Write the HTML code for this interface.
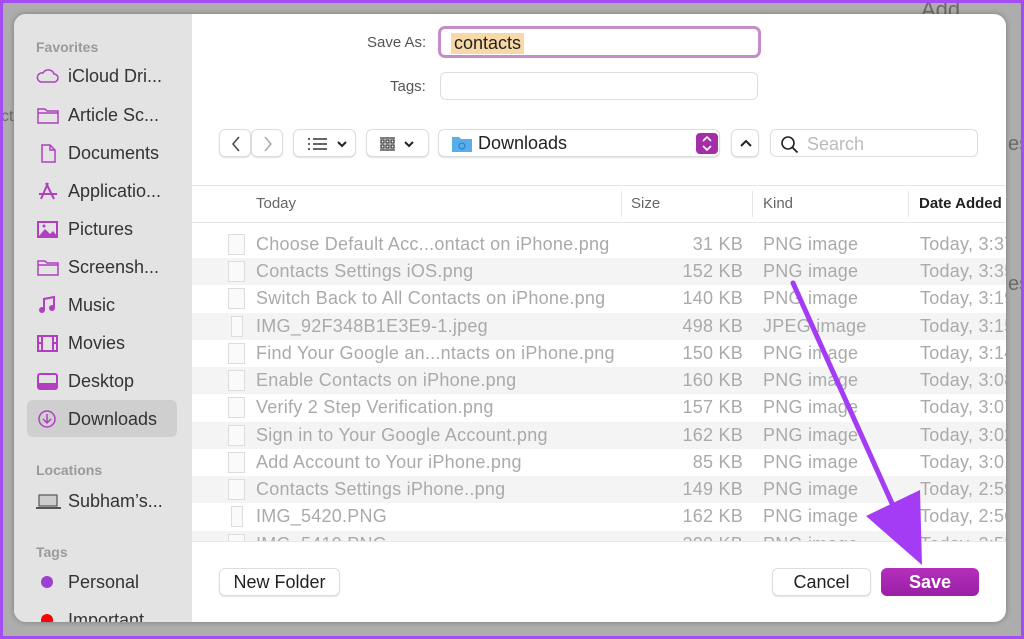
<!DOCTYPE html>
<html><head><meta charset="utf-8"><style>
*{box-sizing:border-box;margin:0;padding:0}
body{width:1024px;height:639px;overflow:hidden;background:#a64cf5;font-family:"Liberation Sans",sans-serif;position:relative}
.bg{position:absolute;left:3px;top:3px;right:3px;bottom:3px;background:#adadad;overflow:hidden}
.bgt{position:absolute;color:#6a6a6a;font-size:20px}
.dlg{position:absolute;left:14px;top:14px;width:992px;height:608px;background:#fff;border-radius:12px;overflow:hidden;box-shadow:0 0 6px rgba(0,0,0,.3)}
.side{position:absolute;left:0;top:0;width:178px;height:608px;background:#e3e3e3}
.sh{position:absolute;left:22px;font-size:14px;color:#9a9a9a;font-weight:bold}
.si{position:absolute;left:22px;font-size:18px;color:#333;height:24px;line-height:24px}
.si svg{position:absolute;left:0;top:2px}
.si span{position:absolute;left:32px;white-space:nowrap}
.abs{position:absolute}
.btn{position:absolute;background:#fff;border:1px solid #ddd;border-radius:6px;box-shadow:0 1px 1px rgba(0,0,0,.12)}
.row{position:absolute;left:178px;width:814px;height:27px;font-size:18px;letter-spacing:.25px;color:#aaa;line-height:27px}
.row.s{background:#f4f4f4}
.row span{position:absolute;white-space:nowrap}
.fi{position:absolute;left:36px;top:3px;width:17px;height:21px;border:1px solid #ddd;background:#fafafa}
</style></head><body>
<div class="bg">
<div class="bgt" style="left:918px;top:-6px;font-size:22px">Add birthd</div>
<div class="bgt" style="left:1005px;top:130px">es</div>
<div class="bgt" style="left:1005px;top:270px">es</div>
<div class="bgt" style="left:-2px;top:105px;font-size:16px">ct</div>
</div>
<div class="dlg">
<div class="side">
<div class="sh" style="top:25px">Favorites</div>
<div class="si" style="top:50px"><svg width="24" height="20" viewBox="0 0 24 20"><path d="M5 16h13a4 4 0 0 0 0-8 6 6 0 0 0-11-1A4.5 4.5 0 0 0 5 16z" fill="none" stroke="#b040c0" stroke-width="1.5"/></svg><span>iCloud Dri...</span></div>
<div class="si" style="top:89px"><svg width="24" height="20" viewBox="0 0 24 20"><path d="M2 4h7l2 2h11v12H2z M2 8h20" fill="none" stroke="#b040c0" stroke-width="1.5"/></svg><span>Article Sc...</span></div>
<div class="si" style="top:127px"><svg width="24" height="20" viewBox="0 0 24 20"><path d="M6 2h8l5 5v12H6z M14 2v5h5" fill="none" stroke="#b040c0" stroke-width="1.5"/></svg><span>Documents</span></div>
<div class="si" style="top:165px"><svg width="24" height="20" viewBox="0 0 24 20"><path d="M12 2L5 18 M10 2l8 16 M3 13h18" fill="none" stroke="#b040c0" stroke-width="2"/></svg><span>Applicatio...</span></div>
<div class="si" style="top:203px"><svg width="24" height="20" viewBox="0 0 24 20"><rect x="2" y="3" width="19" height="15" fill="none" stroke="#b040c0" stroke-width="2"/><path d="M3 17l6-7 5 5 3-3 4 5z" fill="#b040c0"/><circle cx="8" cy="7" r="1.5" fill="#b040c0"/></svg><span>Pictures</span></div>
<div class="si" style="top:241px"><svg width="24" height="20" viewBox="0 0 24 20"><path d="M2 4h7l2 2h11v12H2z M2 8h20" fill="none" stroke="#b040c0" stroke-width="1.5"/></svg><span>Screensh...</span></div>
<div class="si" style="top:279px"><svg width="24" height="20" viewBox="0 0 24 20"><path d="M8 15V4l10-2v11" fill="none" stroke="#b040c0" stroke-width="2"/><circle cx="6" cy="15" r="3" fill="#b040c0"/><circle cx="16" cy="13" r="3" fill="#b040c0"/></svg><span>Music</span></div>
<div class="si" style="top:317px"><svg width="24" height="20" viewBox="0 0 24 20"><rect x="2" y="3" width="19" height="15" fill="none" stroke="#b040c0" stroke-width="2"/><path d="M6 3v15M17 3v15M2 10h4M17 10h4" stroke="#b040c0" stroke-width="2"/></svg><span>Movies</span></div>
<div class="si" style="top:355px"><svg width="24" height="20" viewBox="0 0 24 20"><rect x="2" y="3" width="19" height="15" rx="2" fill="none" stroke="#b040c0" stroke-width="2"/><rect x="3" y="12" width="17" height="5" fill="#b040c0"/></svg><span>Desktop</span></div>
<div class="abs" style="left:13px;top:386px;width:150px;height:37px;background:#cfcfcf;border-radius:6px"></div>
<div class="si" style="top:393px"><svg width="24" height="20" viewBox="0 0 24 20"><circle cx="11" cy="10" r="8" fill="none" stroke="#b040c0" stroke-width="1.5"/><path d="M11 5v9M7 10l4 4 4-4" fill="none" stroke="#b040c0" stroke-width="1.5"/></svg><span>Downloads</span></div>
<div class="sh" style="top:448px">Locations</div>
<div class="si" style="top:475px"><svg width="26" height="20" viewBox="0 0 26 20"><rect x="3" y="4" width="18" height="11" fill="#ccc" stroke="#555" stroke-width="1.2"/><path d="M0 17h25" stroke="#555" stroke-width="2"/></svg><span>Subham’s...</span></div>
<div class="sh" style="top:530px">Tags</div>
<div class="si" style="top:556px"><svg width="24" height="20"><circle cx="11" cy="10" r="6" fill="#9b40d0"/></svg><span>Personal</span></div>
<div class="si" style="top:594px"><svg width="24" height="20"><circle cx="11" cy="10" r="6" fill="#f00"/></svg><span>Important</span></div>
</div>
<div class="abs" style="left:353px;top:20px;font-size:15px;color:#555">Save As:</div>
<div class="abs" style="left:424px;top:12px;width:323px;height:32px;border:3px solid #c48ccb;border-radius:7px;background:#fff"></div>
<div class="abs" style="left:437px;top:19px;height:21px;padding:0 3px;background:#f6d9a6;font-size:18px;color:#222;line-height:21px">contacts</div>
<div class="abs" style="left:376px;top:64px;font-size:15px;color:#555">Tags:</div>
<div class="btn" style="left:426px;top:58px;width:318px;height:28px;box-shadow:none"></div>
<div class="btn" style="left:205px;top:115px;width:32px;height:28px"><svg width="32" height="28"><path d="M19 7l-6 7 6 7" fill="none" stroke="#444" stroke-width="1.5"/></svg></div>
<div class="btn" style="left:237px;top:115px;width:32px;height:28px"><svg width="32" height="28"><path d="M13 7l6 7-6 7" fill="none" stroke="#aaa" stroke-width="1.5"/></svg></div>
<div class="btn" style="left:279px;top:115px;width:63px;height:28px"><svg width="63" height="28"><path d="M14 9h2M14 14h2M14 19h2M19 9h14M19 14h14M19 19h14" stroke="#333" stroke-width="1.6"/><path d="M44 12l4 4 4-4" fill="none" stroke="#222" stroke-width="2"/></svg></div>
<div class="btn" style="left:352px;top:115px;width:63px;height:28px"><svg width="63" height="28"><path d="M13 8h15M13 20h15" stroke="#333" stroke-width="1.2"/><g fill="none" stroke="#333" stroke-width="1.2"><rect x="14" y="10" width="3" height="3"/><rect x="19" y="10" width="3" height="3"/><rect x="24" y="10" width="3" height="3"/><rect x="14" y="15" width="3" height="3"/><rect x="19" y="15" width="3" height="3"/><rect x="24" y="15" width="3" height="3"/></g><path d="M38 12l4 4 4-4" fill="none" stroke="#222" stroke-width="2"/></svg></div>
<div class="btn" style="left:424px;top:115px;width:282px;height:28px"><svg class="abs" style="left:12px;top:5px" width="22" height="18"><path d="M1 2h7l2 2h11v13H1z" fill="#5aaee8"/><circle cx="11" cy="11" r="3" fill="none" stroke="#2a7ac0" stroke-width="1"/></svg><span class="abs" style="left:39px;top:3px;font-size:18px;color:#222">Downloads</span><div class="abs" style="left:257px;top:3px;width:22px;height:21px;background:#a32ea8;border-radius:4px"><svg width="22" height="21"><path d="M7 8l4-4 4 4M7 13l4 4 4-4" fill="none" stroke="#fff" stroke-width="1.6"/></svg></div></div>
<div class="btn" style="left:717px;top:115px;width:28px;height:28px"><svg width="28" height="28"><path d="M9 16l5-5 5 5" fill="none" stroke="#222" stroke-width="2"/></svg></div>
<div class="btn" style="left:756px;top:115px;width:208px;height:28px;box-shadow:none"><svg class="abs" style="left:9px;top:5px" width="20" height="20"><circle cx="8" cy="8" r="6" fill="none" stroke="#222" stroke-width="1.6"/><path d="M12.5 12.5l5 5" stroke="#222" stroke-width="1.8"/></svg><span class="abs" style="left:36px;top:4px;font-size:18px;color:#bbb">Search</span></div>
<div class="abs" style="left:178px;top:171px;width:814px;height:1px;background:#e5e5e5"></div>
<div class="abs" style="left:178px;top:208px;width:814px;height:1px;background:#e5e5e5"></div>
<div class="abs" style="left:607px;top:177px;width:1px;height:26px;background:#e5e5e5"></div>
<div class="abs" style="left:738px;top:177px;width:1px;height:26px;background:#e5e5e5"></div>
<div class="abs" style="left:894px;top:177px;width:1px;height:26px;background:#e5e5e5"></div>
<div class="abs" style="left:242px;top:181px;font-size:15px;color:#666">Today</div>
<div class="abs" style="left:617px;top:181px;font-size:15px;color:#666">Size</div>
<div class="abs" style="left:749px;top:181px;font-size:15px;color:#666">Kind</div>
<div class="abs" style="left:905px;top:181px;font-size:15px;color:#222;font-weight:bold">Date Added</div>
<div class="abs" style="left:178px;top:218px;width:814px;height:309px;overflow:hidden">
<div style="position:relative;left:-178px;top:-218px">
<div class="row" style="top:217px"><div class="fi"></div><span style="left:64px">Choose Default Acc...ontact on iPhone.png</span><span style="right:263px">31 KB</span><span style="left:571px">PNG image</span><span style="left:728px">Today, 3:37</span></div>
<div class="row s" style="top:244px"><div class="fi"></div><span style="left:64px">Contacts Settings iOS.png</span><span style="right:263px">152 KB</span><span style="left:571px">PNG image</span><span style="left:728px">Today, 3:35</span></div>
<div class="row" style="top:271px"><div class="fi"></div><span style="left:64px">Switch Back to All Contacts on iPhone.png</span><span style="right:263px">140 KB</span><span style="left:571px">PNG image</span><span style="left:728px">Today, 3:19</span></div>
<div class="row s" style="top:299px"><div class="fi" style="width:12px;left:39px"></div><span style="left:64px">IMG_92F348B1E3E9-1.jpeg</span><span style="right:263px">498 KB</span><span style="left:571px">JPEG image</span><span style="left:728px">Today, 3:15</span></div>
<div class="row" style="top:326px"><div class="fi"></div><span style="left:64px">Find Your Google an...ntacts on iPhone.png</span><span style="right:263px">150 KB</span><span style="left:571px">PNG image</span><span style="left:728px">Today, 3:14</span></div>
<div class="row s" style="top:353px"><div class="fi"></div><span style="left:64px">Enable Contacts on iPhone.png</span><span style="right:263px">160 KB</span><span style="left:571px">PNG image</span><span style="left:728px">Today, 3:08</span></div>
<div class="row" style="top:380px"><div class="fi"></div><span style="left:64px">Verify 2 Step Verification.png</span><span style="right:263px">157 KB</span><span style="left:571px">PNG image</span><span style="left:728px">Today, 3:07</span></div>
<div class="row s" style="top:408px"><div class="fi"></div><span style="left:64px">Sign in to Your Google Account.png</span><span style="right:263px">162 KB</span><span style="left:571px">PNG image</span><span style="left:728px">Today, 3:02</span></div>
<div class="row" style="top:435px"><div class="fi"></div><span style="left:64px">Add Account to Your iPhone.png</span><span style="right:263px">85 KB</span><span style="left:571px">PNG image</span><span style="left:728px">Today, 3:01</span></div>
<div class="row s" style="top:462px"><div class="fi"></div><span style="left:64px">Contacts Settings iPhone..png</span><span style="right:263px">149 KB</span><span style="left:571px">PNG image</span><span style="left:728px">Today, 2:59</span></div>
<div class="row" style="top:489px"><div class="fi" style="width:12px;left:39px"></div><span style="left:64px">IMG_5420.PNG</span><span style="right:263px">162 KB</span><span style="left:571px">PNG image</span><span style="left:728px">Today, 2:56</span></div>
<div class="row s" style="top:517px"><div class="fi"></div><span style="left:64px">IMG_5419.PNG</span><span style="right:263px">200 KB</span><span style="left:571px">PNG image</span><span style="left:728px">Today, 2:55</span></div>
</div></div>
<div class="abs" style="left:178px;top:527px;width:814px;height:1px;background:#e8e8e8"></div>
<div class="btn" style="left:205px;top:554px;width:121px;height:28px;font-size:18px;color:#222;text-align:center;line-height:26px">New Folder</div>
<div class="btn" style="left:758px;top:554px;width:99px;height:28px;font-size:18px;color:#222;text-align:center;line-height:26px">Cancel</div>
<div class="abs" style="left:867px;top:554px;width:98px;height:28px;border-radius:6px;background:linear-gradient(#b42fbd,#9a1fa4);font-size:18px;color:#fff;text-align:center;line-height:28px;font-weight:bold">Save</div>
</div>
<svg class="abs" style="left:0;top:0" width="1024" height="639"><path d="M793 283L895 510" stroke="#a53cf5" stroke-width="5" stroke-linecap="round"/><path d="M866 516L920 490L922 565Z" fill="#a53cf5"/></svg>
</body></html>
